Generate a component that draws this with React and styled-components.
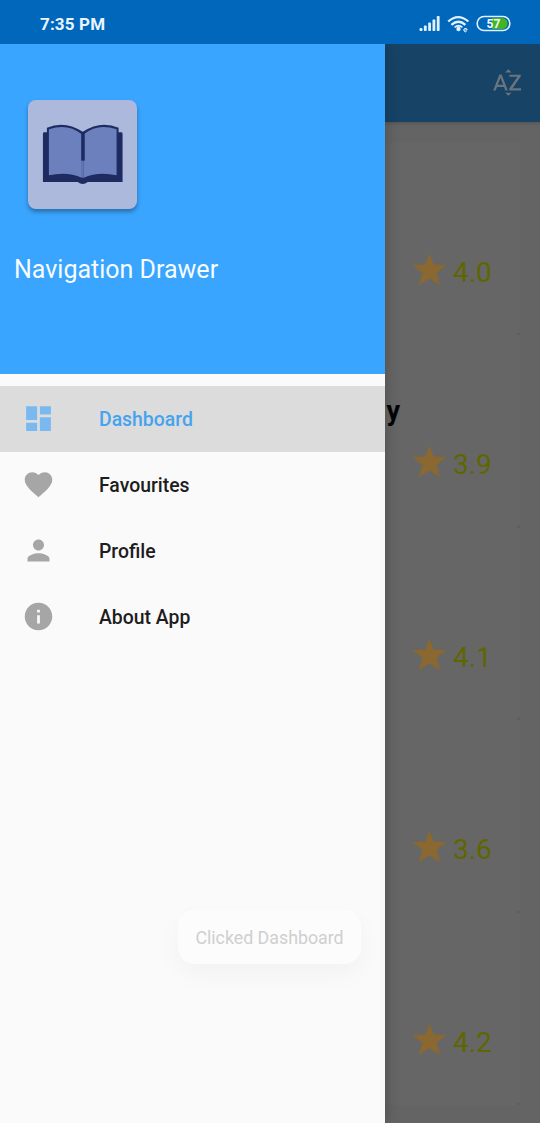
import React from "react";
import styled, { createGlobalStyle } from "styled-components";
import { MdDashboard, MdFavorite, MdPerson, MdInfo, MdSortByAlpha } from "react-icons/md";

const GlobalStyle = createGlobalStyle`
  * { box-sizing: border-box; }
  body { margin: 0; font-family: Roboto, "Liberation Sans", sans-serif; background: #fafafa; }
`;

const Screen = styled.div`
  width: 540px;
  height: 1123px;
  display: flex;
  flex-direction: column;
  overflow: hidden;
`;

const StatusBar = styled.header`
  height: 44px;
  flex: none;
  display: flex;
  align-items: center;
  justify-content: space-between;
  padding: 3px 28px 0 40px;
  background: #0067bb;
  color: #e9f5ff;
  position: relative;
  z-index: 2;
`;

const Clock = styled.span`
  font-size: 17px;
  line-height: 20px;
  font-weight: 700;
  letter-spacing: 0.15px;
  padding-top: 1px;
`;

const Body = styled.div`
  flex: 1;
  min-height: 0;
  display: flex;
`;

const Drawer = styled.aside`
  width: 385px;
  flex: none;
  display: flex;
  flex-direction: column;
  background: #fafafa;
  box-shadow: 0 0 14px rgba(0, 0, 0, 0.25);
  z-index: 1;
`;

const DrawerHeader = styled.div`
  height: 330.4px;
  flex: none;
  padding: 56px 14px 0;
  background: #39a5ff;
`;

const Logo = styled.div`
  width: 108.5px;
  height: 108.5px;
  margin-left: 14px;
  border-radius: 8px;
  background: #acb9dc;
  box-shadow: 0 3px 4px rgba(0, 0, 0, 0.32);
  svg { display: block; }
`;

const DrawerTitle = styled.h1`
  margin: 46px 0 0;
  font-size: 25px;
  line-height: 30px;
  font-weight: 400;
  color: #f6fcff;
`;

const Menu = styled.nav`
  padding-top: 11.6px;
  display: flex;
  flex-direction: column;
`;

const MenuItem = styled.a`
  height: 66px;
  display: flex;
  align-items: center;
  gap: 44px;
  padding-left: 22px;
  font-size: 19.4px;
  font-weight: 500;
  color: ${(p) => (p.$active ? "#45a3ef" : "#1d1d1d")};
  background: ${(p) => (p.$active ? "#dcdcdc" : "transparent")};
  svg {
    margin-bottom: 1px;
    color: ${(p) => (p.$active ? "#79b9ef" : "#a6a6a6")};
  }
`;

const MenuLabel = styled.span`
  line-height: 24px;
  padding-top: 2px;
`;

const Toast = styled.div`
  align-self: flex-end;
  margin: auto 24px 159px 0;
  width: 183px;
  height: 54px;
  display: flex;
  align-items: center;
  justify-content: center;
  border-radius: 16px;
  background: #fcfcfc;
  box-shadow: 0 10px 26px rgba(0, 0, 0, 0.035);
  font-size: 17.8px;
  color: #cfcfcf;
`;

const Pane = styled.main`
  flex: 1;
  min-width: 0;
  display: flex;
  flex-direction: column;
  background: #646464;
`;

const AppBar = styled.div`
  height: 77.5px;
  flex: none;
  display: flex;
  align-items: center;
  justify-content: flex-end;
  padding-right: 16px;
  background: #174366;
  box-shadow: 0 1px 4px rgba(0, 0, 0, 0.2);
  color: #69747d;
`;

const Cards = styled.div`
  padding: 21px 20px 0 0;
  display: flex;
  flex-direction: column;
`;

const Card = styled.article`
  height: 192.6px;
  flex: none;
  display: flex;
  flex-direction: column;
  background: #666;
`;

const CardCorner = styled.i`
  align-self: flex-end;
  width: 3px;
  height: 2px;
  margin-top: auto;
  border-bottom-right-radius: 2px;
  background: #5d5d5d;
`;

const BookTitle = styled.div`
  width: 15px;
  height: 32px;
  margin-top: 60px;
  display: flex;
  justify-content: flex-end;
  font-size: 27px;
  line-height: 32px;
  font-weight: 700;
  color: #050505;
`;

const Rating = styled.div`
  margin-top: 17px;
  padding-left: 27px;
  display: flex;
  align-items: flex-start;
  gap: 6px;
  font-size: 28px;
  line-height: 42px;
  color: #5f6600;
  svg { margin-top: 1px; }
`;

const menu = [
  { label: "Dashboard", Icon: MdDashboard, active: true },
  { label: "Favourites", Icon: MdFavorite },
  { label: "Profile", Icon: MdPerson },
  { label: "About App", Icon: MdInfo },
];

const books = [
  { rating: "4.0" },
  { rating: "3.9", title: "y" },
  { rating: "4.1" },
  { rating: "3.6" },
  { rating: "4.2" },
];

const StatusIcons = () => (
  <svg width="94" height="22" viewBox="418 13 94 22">
    <g fill="#e1f1ff">
      <rect x="419.5" y="28" width="3" height="3" rx="1" />
      <rect x="423.9" y="25.5" width="2.8" height="5.5" rx=".8" />
      <rect x="428.2" y="22.5" width="2.8" height="8.5" rx=".8" />
      <rect x="432.5" y="19.5" width="2.8" height="11.5" rx=".8" />
      <rect x="436.8" y="16" width="2.8" height="15" rx=".8" />
      <circle cx="458.5" cy="29" r="2.2" />
    </g>
    <g fill="none" stroke="#e1f1ff" strokeWidth="2.3">
      <path d="M448.2 21.5q10-8.8 20.2 0" />
      <path d="M451.4 24.8q7-6.2 14 0" />
      <path d="M454.6 27.4q4-3.2 7.8 0" strokeWidth="1.8" />
      <path d="M463.8 30h3.4a1.7 1.7 0 1 0-.6 1.4" strokeWidth="1" />
    </g>
    <path d="M492 18h10a5.5 5.5 0 0 1 0 11h-10z" fill="#43b51f" />
    <rect x="477.2" y="16.5" width="32.6" height="14" rx="6.8" fill="none" stroke="#e1f1ff" strokeWidth="1.6" />
    <text x="493.5" y="27.9" textAnchor="middle" fontSize="12" fontWeight="700" fill="#f2fbff">57</text>
  </svg>
);

const Book = () => (
  <svg width="108.5" height="108.5" viewBox="0 0 109 109">
    <path d="M15 34q0-1.5 1.5-1.5H19V28Q37 20 55 32Q73 20 91 28v4.5h2.5Q95 32.5 95 34V82.5H60Q55 86.5 50 82.5H15z" fill="#1d2b61" />
    <path d="M21 29.5Q40 23 54 34.5V78Q40 71.5 21 75.5z" fill="#6c80bd" />
    <path d="M56 34.5Q70 23 89 29.5V75.5Q70 71.5 56 78z" fill="#6c80bd" />
    <path d="M53.5 33h3.5v28h-3.5z" fill="#1d2b61" />
    <path d="M53.8 61h2.4v17h-2.4z" fill="#6c80bd" />
    <path d="M55.5 61v17" stroke="#4d609f" strokeWidth="1" />
  </svg>
);

const Star = () => (
  <svg width="35" height="34" viewBox="0 0 35 34">
    <path d="M17.5 1L21.6 11.8 34 12.3 24.3 20 28 32 17.5 25.2 7 32 10.7 20 1 12.3 13.4 11.8z" fill="#8a682f" stroke="#80683f" strokeWidth=".7" />
  </svg>
);

export default function App() {
  return (
    <Screen>
      <GlobalStyle />
      <StatusBar>
        <Clock>7:35 PM</Clock>
        <StatusIcons />
      </StatusBar>
      <Body>
        <Drawer>
          <DrawerHeader>
            <Logo><Book /></Logo>
            <DrawerTitle>Navigation Drawer</DrawerTitle>
          </DrawerHeader>
          <Menu>
            {menu.map(({ label, Icon, active }) => (
              <MenuItem key={label} $active={active}>
                <Icon size={33} />
                <MenuLabel>{label}</MenuLabel>
              </MenuItem>
            ))}
          </Menu>
          <Toast>Clicked Dashboard</Toast>
        </Drawer>
        <Pane>
          <AppBar><MdSortByAlpha size={33} /></AppBar>
          <Cards>
            {books.map(({ rating, title }) => (
              <Card key={rating}>
                <BookTitle>{title}</BookTitle>
                <Rating><Star />{rating}</Rating>
                <CardCorner />
              </Card>
            ))}
          </Cards>
        </Pane>
      </Body>
    </Screen>
  );
}
